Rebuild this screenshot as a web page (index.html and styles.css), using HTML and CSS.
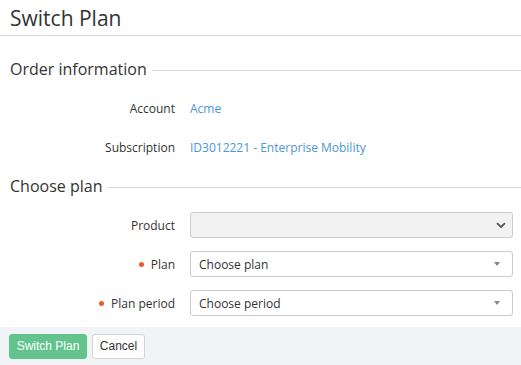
FILE: index.html
```html
<!DOCTYPE html>
<html>
<head>
<meta charset="utf-8">
<link rel="stylesheet" href="styles.css">
</head>
<body>
<div class="header"><h1 class="title">Switch Plan</h1></div>

<div class="section section-order">
  <div class="legend"><span>Order information</span></div>
  <div class="info-row"><div class="label">Account</div><a class="value">Acme</a></div>
  <div class="info-row"><div class="label">Subscription</div><a class="value">ID3012221 - Enterprise Mobility</a></div>
</div>

<div class="section section-plan">
  <div class="legend"><span>Choose plan</span></div>
  <div class="form">
    <div class="form-row">
      <div class="label">Product</div>
      <div class="select select-disabled">
        <span class="select-text"></span>
        <svg class="chevron" width="10" height="7" viewBox="0 0 10 7"><path d="M1 1.2 L5 5 L9 1.2" fill="none" stroke="#555" stroke-width="1.8"/></svg>
      </div>
    </div>
    <div class="form-row">
      <div class="label"><span class="req"></span>Plan</div>
      <div class="select">
        <span class="select-text">Choose plan</span>
        <span class="caret"></span>
      </div>
    </div>
    <div class="form-row">
      <div class="label"><span class="req"></span>Plan period</div>
      <div class="select">
        <span class="select-text">Choose period</span>
        <span class="caret"></span>
      </div>
    </div>
  </div>
</div>

<div class="footer">
  <button class="btn btn-primary">Switch Plan</button>
  <button class="btn btn-default">Cancel</button>
</div>
</body>
</html>
```

FILE: styles.css
```css
html, body {
  margin: 0;
  padding: 0;
  background: #fff;
}
body {
  font-family: "Open Sans", "DejaVu Sans", sans-serif;
  color: #333;
  width: 521px;
  height: 365px;
  overflow: hidden;
}
.header {
  height: 35px;
  border-bottom: 1px solid #dcdcdc;
  padding: 0 10px;
  display: flex;
  align-items: center;
}
.title {
  margin: 0;
  font-weight: 400;
  font-size: 21px;
  line-height: 28px;
  color: #333;
}
.section {
  padding: 0 0 0 10px;
}
.legend {
  display: flex;
  align-items: center;
  margin-top: 21px;
  height: 24px;
  font-size: 16px;
  color: #333;
}
.legend::after {
  content: "";
  flex: 1;
  height: 1px;
  background: #d8dce1;
  margin-left: 5px;
  margin-top: 2px;
}
.section-order .legend {
  margin-bottom: 8px;
}
.info-row {
  display: flex;
  align-items: center;
  height: 39px;
  font-size: 12px;
}
.label {
  width: 165px;
  text-align: right;
  display: flex;
  justify-content: flex-end;
  align-items: center;
  font-size: 12px;
  color: #333;
  flex-shrink: 0;
}
.value {
  margin-left: 15px;
  color: #4b95d8;
  text-decoration: none;
}
.section-plan .legend {
  margin-top: 7px;
}
.form {
  display: flex;
  flex-direction: column;
  gap: 13px;
  margin-top: 14px;
  padding-right: 8px;
}
.form-row {
  display: flex;
  align-items: center;
  height: 26px;
}
.req {
  width: 5px;
  height: 5px;
  border-radius: 50%;
  background: #f05a2b;
  margin-right: 7px;
}
.select {
  margin-left: 15px;
  flex: 1;
  height: 26px;
  box-sizing: border-box;
  border: 1px solid #cbcbcb;
  border-radius: 3px;
  background: #fff;
  display: flex;
  align-items: center;
  justify-content: space-between;
  padding: 0 9px 0 8px;
  font-size: 12px;
  color: #333;
}
.select-disabled {
  background: #f2f2f2;
  padding-right: 6px;
}
.chevron {
  display: block;
}
.caret {
  width: 0;
  height: 0;
  border-left: 3.5px solid transparent;
  border-right: 3.5px solid transparent;
  border-top: 4px solid #888;
  margin-right: 3px;
}
.footer {
  margin-top: 11px;
  height: 38px;
  background: #f1f4f7;
  display: flex;
  align-items: center;
  gap: 5px;
  padding: 0 9px;
}
.btn {
  font-family: "Liberation Sans", Arial, sans-serif;
  font-size: 12px;
  height: 25px;
  box-sizing: border-box;
  border-radius: 3px;
  padding: 0;
  white-space: nowrap;
  cursor: pointer;
}
.btn-primary {
  background: #63c38d;
  border: 1px solid #63c38d;
  color: #fff;
  width: 78px;
}
.btn-default {
  background: #fff;
  border: 1px solid #d4d4d4;
  color: #333;
  width: 53px;
}
```
